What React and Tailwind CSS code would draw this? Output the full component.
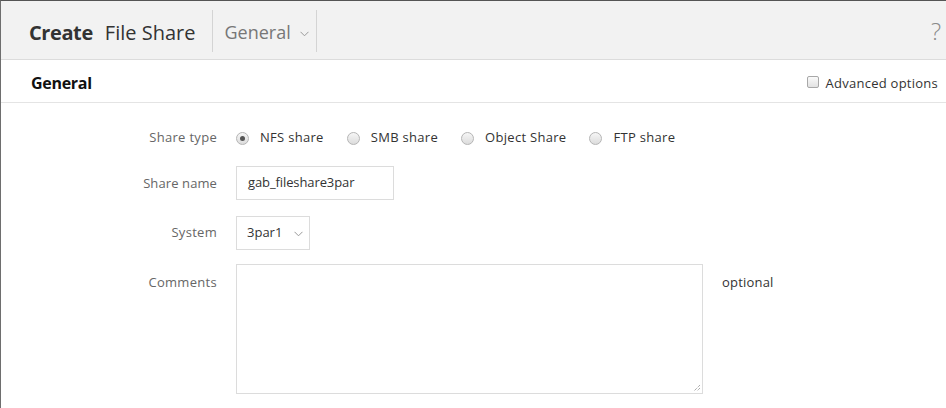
import React from "react";

function Radio({ checked, label }) {
  return (
    <label className="flex items-center">
      <span className="w-[13px] h-[13px] rounded-full border border-[#b5b5b5] bg-gradient-to-b from-[#f6f6f6] to-[#dcdcdc] flex items-center justify-center">
        {checked && <span className="w-[5px] h-[5px] rounded-full bg-[#555]" />}
      </span>
      <span className="ml-[11px] text-[13px] text-[#333] tracking-[0.3px]">{label}</span>
    </label>
  );
}

function Chevron({ className }) {
  return (
    <svg width="9" height="6" viewBox="0 0 9 6" className={className}>
      <path d="M0.5 0.8 L4.5 4.8 L8.5 0.8" fill="none" stroke="#999" strokeWidth="1" />
    </svg>
  );
}

export default function App() {
  return (
    <div
      className="w-[946px] h-[408px] bg-white border-t border-t-[#555] border-l border-l-[#6e6e6e] overflow-hidden"
      style={{ fontFamily: '"Open Sans", "Liberation Sans", sans-serif' }}
    >
      <div className="h-[59px] bg-[#f2f2f2] border-b border-[#dcdcdc] flex items-center">
        <div className="pl-[28px] flex items-baseline pr-[17px] pt-[5px]">
          <span className="text-[20px] font-bold text-[#333] tracking-[-0.4px]">Create</span>
          <span className="ml-[12px] text-[20px] text-[#333]">File Share</span>
        </div>
        <div className="h-[42px] mt-[2px] w-px bg-[#d4d4d4]" />
        <div className="flex items-center pl-[11px] pr-[7px] pt-[5px]">
          <span className="text-[18px] text-[#777]">General</span>
          <Chevron className="ml-[9px] mt-[3px]" />
        </div>
        <div className="h-[42px] mt-[2px] w-px bg-[#d4d4d4]" />
        <div className="flex-1" />
        <span className="mr-[5px] text-[24px] font-light text-[#8a8a8a] pt-[1px]">?</span>
      </div>
      <div className="h-[43px] border-b border-[#e4e4e4] flex items-center pl-[30px] pr-[8px]">
        <span className="text-[16px] font-bold text-[#111] tracking-[-0.3px] mt-[3px]">General</span>
        <div className="flex-1" />
        <span className="w-[12px] h-[12px] rounded-[2px] border border-[#a8a8a8] bg-gradient-to-b from-[#fafafa] to-[#e2e2e2] mt-[1px]" />
        <span className="ml-[7px] text-[13px] text-[#333] tracking-[0.25px] mt-[5px]">Advanced options</span>
      </div>
      <div className="pt-[24px] grid grid-cols-[216px_1fr] gap-x-[19px] text-[13px]">
        <div className="h-[22px] flex items-center justify-end text-[#666] tracking-[0.3px]">Share type</div>
        <div className="h-[22px] flex items-center">
          <Radio checked label="NFS share" />
          <div className="w-[23px]" />
          <Radio label="SMB share" />
          <div className="w-[23px]" />
          <Radio label="Object Share" />
          <div className="w-[23px]" />
          <Radio label="FTP share" />
        </div>

        <div className="mt-[17px] h-[34px] flex items-center justify-end text-[#666] tracking-[0.1px] pt-[2px]">Share name</div>
        <div className="mt-[17px]">
          <div className="w-[158px] h-[34px] border border-[#dcdcdc] flex items-center pl-[11px] text-[#333] tracking-[-0.1px]">
            gab_fileshare3par
          </div>
        </div>

        <div className="mt-[16px] h-[34px] flex items-center justify-end text-[#666] tracking-[0.3px]">System</div>
        <div className="mt-[16px]">
          <div className="w-[74px] h-[34px] border border-[#dcdcdc] flex items-center pl-[10px] text-[#333]">
            3par1
            <Chevron className="ml-[12px] mt-[2px]" />
          </div>
        </div>

        <div className="mt-[14px] pt-[9px] flex justify-end text-[#666] tracking-[0.3px]">Comments</div>
        <div className="mt-[14px] flex items-start">
          <div className="relative w-[467px] h-[130px] border border-[#dcdcdc]">
            <svg width="8" height="8" viewBox="0 0 8 8" className="absolute right-[1px] bottom-[1px]">
              <path d="M7 1 L1 7 M7 4 L4 7" stroke="#888" strokeWidth="1" strokeDasharray="1 1" />
            </svg>
          </div>
          <span className="ml-[19px] mt-[9px] text-[#333] tracking-[0.2px]">optional</span>
        </div>
      </div>
    </div>
  );
}
